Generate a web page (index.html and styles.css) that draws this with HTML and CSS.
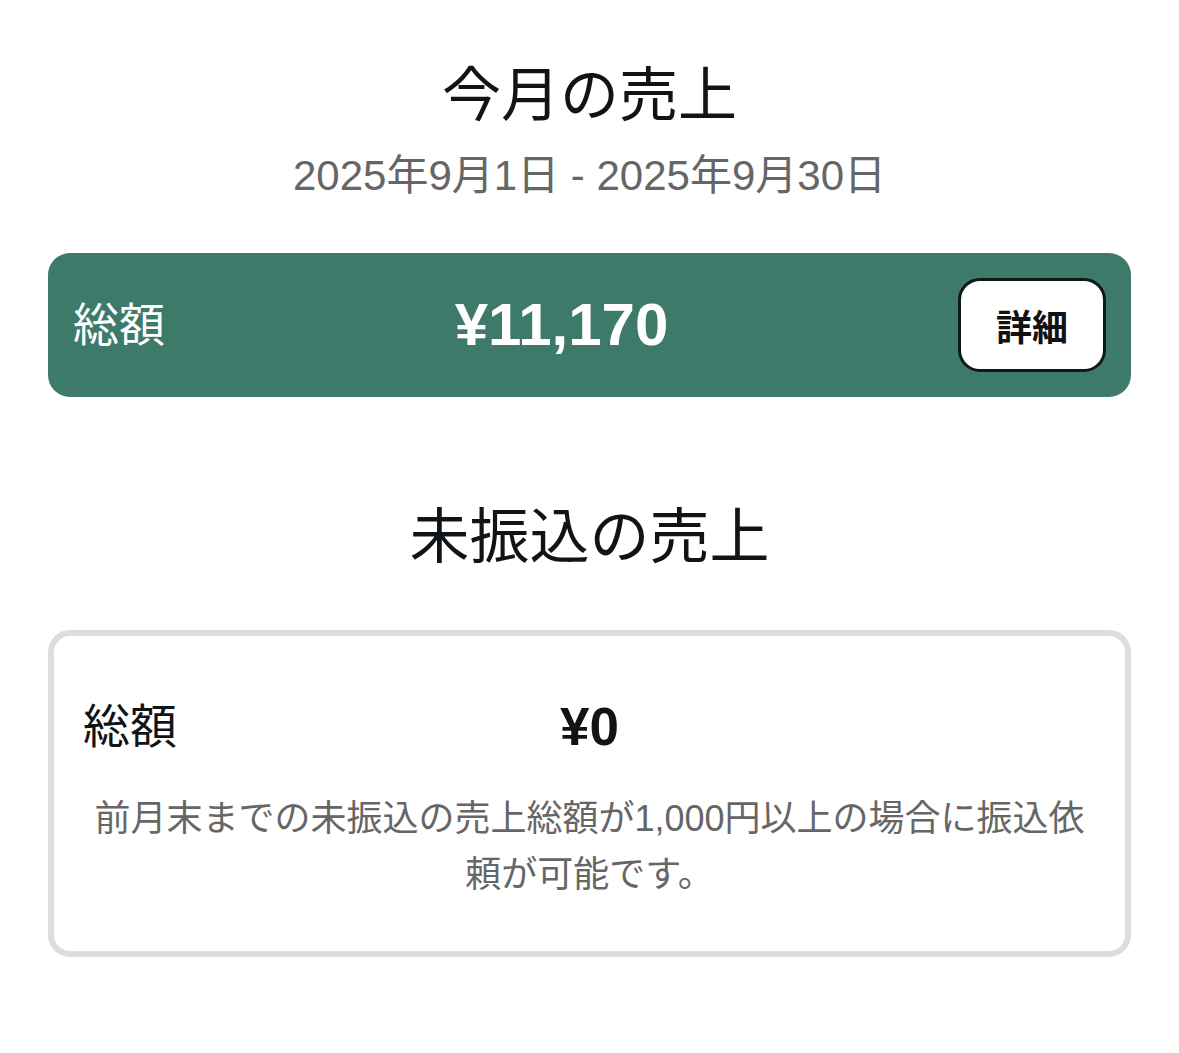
FILE: index.html
```html
<!DOCTYPE html>
<html lang="ja">
<head>
<meta charset="utf-8">
<title>売上</title>
<link rel="stylesheet" href="styles.css">
</head>
<body>
<main class="page">
  <h1 class="heading">今月の売上</h1>
  <p class="period">2025年9月1日 - 2025年9月30日</p>
  <section class="total-bar">
    <span class="bar-label">総額</span>
    <span class="bar-amount">¥11,170</span>
    <button class="detail-btn" type="button">詳細</button>
  </section>

  <h2 class="heading heading-second">未振込の売上</h2>
  <section class="pending-card">
    <div class="pending-row">
      <span class="pending-label">総額</span>
      <span class="pending-amount">¥0</span>
      <span class="pending-spacer"></span>
    </div>
    <p class="pending-note">前月末までの未振込の売上総額が1,000円以上の場合に振込依頼が可能です。</p>
  </section>
</main>
</body>
</html>
```
FILE: styles.css
```css
html, body {
  margin: 0;
  padding: 0;
  background: #ffffff;
}

body {
  font-family: "Liberation Sans", "Noto Sans CJK JP", sans-serif;
  color: #111417;
}

.page {
  padding: 61px 48px 40px;
  display: flex;
  flex-direction: column;
}

.heading {
  margin: 0;
  text-align: center;
  font-size: 59px;
  line-height: 70px;
  font-weight: 400;
  color: #111417;
}

.period {
  margin: 20px 0 0;
  text-align: center;
  font-size: 42px;
  line-height: 50px;
  color: #666666;
}

.total-bar {
  margin-top: 52px;
  height: 144px;
  box-sizing: border-box;
  background: #3e7a69;
  border-radius: 22px;
  padding: 0 25px;
  display: flex;
  align-items: center;
}

.bar-label {
  font-size: 46px;
  line-height: 50px;
  color: #ffffff;
  white-space: nowrap;
}

.bar-amount {
  flex: 1;
  text-align: center;
  font-size: 60px;
  font-weight: 700;
  line-height: 66px;
  color: #ffffff;
}

.detail-btn {
  width: 148px;
  height: 94px;
  box-sizing: border-box;
  background: #ffffff;
  border: 3px solid #0f1a17;
  border-radius: 22px;
  font-family: "Liberation Sans", "Noto Sans CJK JP", sans-serif;
  font-size: 36px;
  font-weight: 700;
  color: #111111;
  padding: 0;
}

.heading-second {
  margin-top: 106px;
  font-size: 60px;
}

.pending-card {
  margin-top: 57px;
  border: 6px solid #dcdedd;
  border-radius: 22px;
  padding: 63px 29px 48px;
}

.pending-row {
  display: grid;
  grid-template-columns: 1fr auto 1fr;
  align-items: center;
  height: 56px;
}

.pending-label {
  font-size: 47px;
  line-height: 56px;
  color: #111417;
}

.pending-amount {
  font-size: 53px;
  font-weight: 700;
  line-height: 56px;
  color: #111417;
}

.pending-note {
  margin: 36px 0 0;
  text-align: center;
  font-size: 36px;
  line-height: 56px;
  color: #666666;
}
```
